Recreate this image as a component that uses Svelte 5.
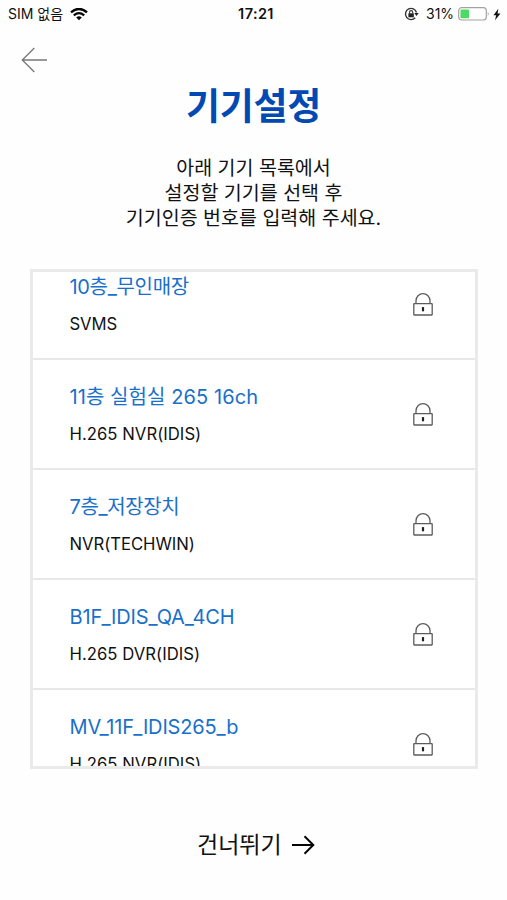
<script>
  const devices = [
    { name: '10층_무인매장', model: 'SVMS', spacing: -0.32, sub: -0.1 },
    { name: '11층 실험실 265 16ch', model: 'H.265 NVR(IDIS)', spacing: 0.08, sub: 0.03 },
    { name: '7층_저장장치', model: 'NVR(TECHWIN)', spacing: -0.4, sub: -0.05 },
    { name: 'B1F_IDIS_QA_4CH', model: 'H.265 DVR(IDIS)', spacing: -0.15, sub: 0.03 },
    { name: 'MV_11F_IDIS265_b', model: 'H.265 NVR(IDIS)', spacing: -0.15, sub: 0.03 }
  ];
</script>

<main>
  <header class="status">
    <div class="carrier">
      <span class="sim">SIM 없음</span>
      <svg width="18" height="13" viewBox="0 0 18 13" fill="none" stroke="#050505">
        <path d="M1 4.3Q9-2.4 17 4.3" stroke-width="2.4" />
        <path d="M3.8 7.3Q9 3 14.2 7.3" stroke-width="2.2" />
        <path d="M6.2 9.5Q9 7.2 11.8 9.5L9 12.2Z" fill="#050505" stroke="none" />
      </svg>
    </div>
    <time>17:21</time>
    <div class="power">
      <svg class="rotation" width="15" height="14" viewBox="0 0 15 14" fill="none" stroke="#333">
        <path d="M11.2 10.8A5.6 5.6 0 1 1 12.5 5.5" stroke-width="1.4" />
        <path d="M10.3 6h4.4l-2.2 3Z" fill="#222" stroke="none" />
        <rect x="4.4" y="6.3" width="5.4" height="4" fill="#222" stroke="none" />
        <path d="M5.5 6.5V5.2a1.6 1.6 0 0 1 3.2 0v1.3" stroke-width="1.1" />
      </svg>
      <span class="percent">31%</span>
      <svg class="battery" width="33" height="14" viewBox="0 0 33 14">
        <rect x=".7" y=".7" width="27.6" height="12.3" rx="3" fill="#fff" stroke="#a2a2a2" stroke-width="1.2" />
        <rect x="2.5" y="2.5" width="8.6" height="8.8" rx="1" fill="#4cd964" />
        <path d="M29.8 4.8q1.8 2 0 4.2Z" fill="#999" />
      </svg>
      <svg width="8" height="13" viewBox="0 0 8 13"><path d="M5.3.8.5 7.2h2.7L2 12.2 7.5 5.4H4.6Z" fill="#111" /></svg>
    </div>
  </header>

  <button class="back" aria-label="뒤로">
    <svg width="28" height="26" viewBox="0 0 28 26" fill="none" stroke="#777" stroke-width="1.3">
      <path d="M13.3 1 1.3 13l12 12M1.3 13H26" />
    </svg>
  </button>

  <h1>기기설정</h1>
  <p class="guide"><span>아래 기기 목록에서</span><span>설정할 기기를 선택 후</span><span>기기인증 번호를 입력해 주세요.</span></p>

  <section class="list">
    {#each devices as device}
      <article>
        <div class="info">
          <h2 style="letter-spacing: {device.spacing}px">{device.name}</h2>
          <p style="letter-spacing: {device.sub}px">{device.model}</p>
        </div>
        <svg width="22" height="24" viewBox="0 0 22 24" fill="none" stroke="#5c5c5c" stroke-width="1.3">
          <path d="M4 10.6V7.7a7 7 0 0 1 14 0v2.9" />
          <rect x="1.8" y="10.6" width="18.4" height="11.4" rx=".4" />
          <path d="M11 14.1v4.2" stroke="#222" stroke-width="2.2" />
        </svg>
      </article>
    {/each}
  </section>

  <button class="skip">
    <span>건너뛰기</span>
    <svg width="23" height="20" viewBox="0 0 23 20" fill="none" stroke="#050505" stroke-width="2">
      <path d="M0 10h21M12.5 1.3 21.3 10l-8.8 8.7" />
    </svg>
  </button>
</main>

<style>
  :global(body) { margin: 0; background: #fefefe; }
  main {
    box-sizing: border-box; width: 507px; height: 900px; overflow: hidden;
    display: flex; flex-direction: column; background: #fefefe; color: #111;
    font-family: Inter, "Noto Sans CJK KR", sans-serif;
  }
  h1, h2, p { margin: 0; font-weight: 400; }
  svg { display: block; flex: none; }
  button { border: 0; padding: 0; background: none; font: inherit; color: inherit; }
  .status {
    height: 28px; padding: 0 6px 0 8px; flex: none; box-sizing: border-box;
    display: grid; grid-template-columns: 1fr auto 1fr; align-items: center;
    font-size: 14px; line-height: 20px;
  }
  .status > div { display: flex; align-items: center; white-space: nowrap; }
  .sim { width: 56px; margin-right: 6px; letter-spacing: 0; }
  time { padding-left: 3px; font-size: 14.5px; font-weight: 600; letter-spacing: .4px; }
  .power { justify-content: flex-end; }
  .rotation { margin-right: 7px; }
  .percent { width: 29px; margin-right: 3px; letter-spacing: 0; }
  .battery { margin-right: 2px; }
  .back { width: 28px; height: 26px; margin: 19px 0 0 21px; flex: none; }
  h1 {
    height: 52px; margin-top: 8px; flex: none; text-align: center; color: #0349b3;
    font-size: 37px; line-height: 52px; font-weight: 700; letter-spacing: -.3px;
  }
  .guide {
    height: 75px; margin-top: 23px; flex: none; display: flex; flex-direction: column;
    align-items: center; font-size: 19.5px; line-height: 25px; letter-spacing: 0;
  }
  .guide span { height: 25px; white-space: nowrap; }
  .list {
    box-sizing: border-box; width: 448px; height: 500px; margin: 38px 0 0 30px;
    flex: none; border: 3px solid #eaeaea; overflow: hidden; background: #fff;
  }
  article {
    box-sizing: border-box; height: 110px; border-bottom: 2px solid #e7e7e7;
    padding: 23px 41.5px 0 36.5px; display: flex; justify-content: space-between;
  }
  article:first-child { margin-top: -22px; }
  article svg { margin-top: 20px; }
  h2 { color: #1970ca; font-size: 20px; line-height: 28px; white-space: nowrap; }
  .info p { margin-top: 12px; font-size: 16.7px; line-height: 22px; white-space: nowrap; }
  .skip {
    align-self: flex-start; height: 34px; margin: 59px 0 0 197px; display: flex; align-items: center;
    gap: 9px; font-size: 23px; line-height: 34px;
  }
  .skip span { width: 86px; white-space: nowrap; text-align: left; }
</style>
